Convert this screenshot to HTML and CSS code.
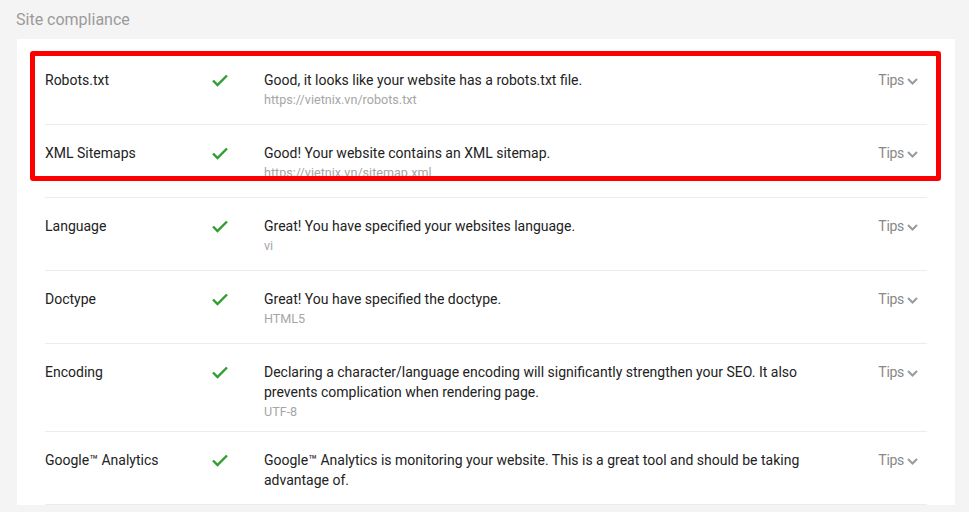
FILE: index.html
```html
<!DOCTYPE html>
<html lang="en">
<head>
    <meta charset="UTF-8">
    <meta name="viewport" content="width=device-width, initial-scale=1.0">
    <title>Site compliance</title>
    <link rel="stylesheet" href="styles.css">
</head>
<body>
    <h2 class="section-title">Site compliance</h2>
    <div class="card">
        <div class="row">
            <div class="label">Robots.txt</div>
            <div class="status"><svg width="16" height="13" viewBox="0 0 16 13"><polyline points="1,6.5 5.5,11 15,1.5" fill="none" stroke="#2f9e2f" stroke-width="2.4"/></svg></div>
            <div class="info">
                <p class="msg">Good, it looks like your website has a robots.txt file.</p>
                <p class="sub">https://vietnix.vn/robots.txt</p>
            </div>
            <div class="tips">Tips <svg width="11" height="7" viewBox="0 0 11 7"><polyline points="1,1 5.5,5.5 10,1" fill="none" stroke="#9a9a9a" stroke-width="2"/></svg></div>
        </div>
        <div class="row">
            <div class="label">XML Sitemaps</div>
            <div class="status"><svg width="16" height="13" viewBox="0 0 16 13"><polyline points="1,6.5 5.5,11 15,1.5" fill="none" stroke="#2f9e2f" stroke-width="2.4"/></svg></div>
            <div class="info">
                <p class="msg">Good! Your website contains an XML sitemap.</p>
                <p class="sub">https://vietnix.vn/sitemap.xml</p>
            </div>
            <div class="tips">Tips <svg width="11" height="7" viewBox="0 0 11 7"><polyline points="1,1 5.5,5.5 10,1" fill="none" stroke="#9a9a9a" stroke-width="2"/></svg></div>
        </div>
        <div class="row">
            <div class="label">Language</div>
            <div class="status"><svg width="16" height="13" viewBox="0 0 16 13"><polyline points="1,6.5 5.5,11 15,1.5" fill="none" stroke="#2f9e2f" stroke-width="2.4"/></svg></div>
            <div class="info">
                <p class="msg">Great! You have specified your websites language.</p>
                <p class="sub">vi</p>
            </div>
            <div class="tips">Tips <svg width="11" height="7" viewBox="0 0 11 7"><polyline points="1,1 5.5,5.5 10,1" fill="none" stroke="#9a9a9a" stroke-width="2"/></svg></div>
        </div>
        <div class="row">
            <div class="label">Doctype</div>
            <div class="status"><svg width="16" height="13" viewBox="0 0 16 13"><polyline points="1,6.5 5.5,11 15,1.5" fill="none" stroke="#2f9e2f" stroke-width="2.4"/></svg></div>
            <div class="info">
                <p class="msg">Great! You have specified the doctype.</p>
                <p class="sub">HTML5</p>
            </div>
            <div class="tips">Tips <svg width="11" height="7" viewBox="0 0 11 7"><polyline points="1,1 5.5,5.5 10,1" fill="none" stroke="#9a9a9a" stroke-width="2"/></svg></div>
        </div>
        <div class="row">
            <div class="label">Encoding</div>
            <div class="status"><svg width="16" height="13" viewBox="0 0 16 13"><polyline points="1,6.5 5.5,11 15,1.5" fill="none" stroke="#2f9e2f" stroke-width="2.4"/></svg></div>
            <div class="info">
                <p class="msg">Declaring a character/language encoding will significantly strengthen your SEO. It also prevents complication when rendering page.</p>
                <p class="sub">UTF-8</p>
            </div>
            <div class="tips">Tips <svg width="11" height="7" viewBox="0 0 11 7"><polyline points="1,1 5.5,5.5 10,1" fill="none" stroke="#9a9a9a" stroke-width="2"/></svg></div>
        </div>
        <div class="row">
            <div class="label">Google™ Analytics</div>
            <div class="status"><svg width="16" height="13" viewBox="0 0 16 13"><polyline points="1,6.5 5.5,11 15,1.5" fill="none" stroke="#2f9e2f" stroke-width="2.4"/></svg></div>
            <div class="info">
                <p class="msg">Google™ Analytics is monitoring your website. This is a great tool and should be taking advantage of.</p>
            </div>
            <div class="tips">Tips <svg width="11" height="7" viewBox="0 0 11 7"><polyline points="1,1 5.5,5.5 10,1" fill="none" stroke="#9a9a9a" stroke-width="2"/></svg></div>
        </div>
    </div>
    <div class="highlight"></div>
</body>
</html>
```

FILE: styles.css
```css
/* Reset */
* {
    margin: 0;
    padding: 0;
    box-sizing: border-box;
}

body {
    font-family: Roboto, 'Liberation Sans', sans-serif;
    background: #f4f4f4;
    color: #222;
    font-size: 14px;
    position: relative;
    height: 512px;
    overflow: hidden;
}

/* Titulo */
.section-title {
    font-size: 16px;
    font-weight: normal;
    color: #9b9b9b;
    padding: 10px 16px 0;
    height: 39px;
}

/* Card */
.card {
    background: #fff;
    margin-left: 17px;
    width: 938px;
    padding: 13px 28px 0;
}

.row {
    display: grid;
    grid-template-columns: 167px 52px 560px 1fr;
    min-height: 73px;
    padding: 18px 0 10px;
    border-bottom: 1px solid #ececec;
}

.label {
    line-height: 20px;
    color: #222;
}

.status {
    height: 20px;
    display: flex;
    align-items: center;
}

.msg {
    line-height: 20px;
    color: #222;
}

.sub {
    font-size: 12.6px;
    line-height: 19px;
    color: #a6a6a6;
}

.tips {
    justify-self: end;
    margin-right: 9px;
    line-height: 20px;
    font-size: 14px;
    letter-spacing: -0.3px;
    color: #888;
    display: flex;
    align-items: center;
    gap: 3px;
    height: 20px;
}

.tips svg {
    margin-top: 2px;
}

/* Marcacao vermelha */
.highlight {
    position: absolute;
    left: 30px;
    top: 51px;
    width: 911px;
    height: 130px;
    border: 5px solid #f00;
    border-radius: 3px;
}
```
